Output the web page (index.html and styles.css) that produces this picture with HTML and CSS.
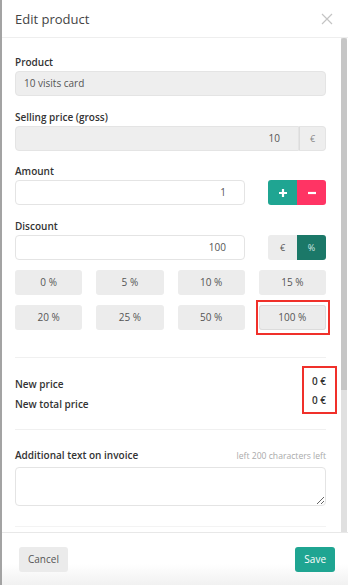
FILE: index.html
```html
<!DOCTYPE html>
<html>
<head>
    <meta charset="UTF-8">
    <title>Edit product</title>
    <link rel="stylesheet" href="styles.css">
</head>
<body>
    <div class="modal">
        <div class="modal-header">
            <span class="modal-title">Edit product</span>
            <span class="modal-close">
                <svg width="12" height="12" viewBox="0 0 12 12"><path d="M1 1 L11 11 M11 1 L1 11" stroke="#c4c4c4" stroke-width="1.2" fill="none"/></svg>
            </span>
        </div>
        <div class="modal-body">
            <div class="body-content">
                <div class="form-group">
                    <label>Product</label>
                    <div class="field readonly">10 visits card</div>
                </div>
                <div class="form-group">
                    <label>Selling price (gross)</label>
                    <div class="input-group">
                        <div class="field readonly num">10</div>
                        <div class="addon">€</div>
                    </div>
                </div>
                <div class="form-group">
                    <label>Amount</label>
                    <div class="row">
                        <div class="field num">1</div>
                        <div class="btn-pair">
                            <span class="btn-sq green">
                                <svg width="10" height="10" viewBox="0 0 10 10"><path d="M5 1 V9 M1 5 H9" stroke="#fff" stroke-width="2.2"/></svg>
                            </span>
                            <span class="btn-sq red">
                                <svg width="10" height="10" viewBox="0 0 10 10"><path d="M1 5 H9" stroke="#fff" stroke-width="2.2"/></svg>
                            </span>
                        </div>
                    </div>
                </div>
                <div class="form-group">
                    <label>Discount</label>
                    <div class="row">
                        <div class="field num">100</div>
                        <div class="btn-pair">
                            <span class="btn-sq grey">€</span>
                            <span class="btn-sq dark">%</span>
                        </div>
                    </div>
                </div>
                <div class="presets">
                    <span class="preset">0 %</span>
                    <span class="preset">5 %</span>
                    <span class="preset">10 %</span>
                    <span class="preset">15 %</span>
                    <span class="preset">20 %</span>
                    <span class="preset">25 %</span>
                    <span class="preset">50 %</span>
                    <span class="preset marked">100 %</span>
                </div>

                <div class="totals">
                    <div class="totals-labels">
                        <div>New price</div>
                        <div>New total price</div>
                    </div>
                    <div class="totals-values">
                        <div>0 €</div>
                        <div>0 €</div>
                    </div>
                </div>

                <div class="note">
                    <div class="note-head">
                        <label>Additional text on invoice</label>
                        <span class="hint">left 200 characters left</span>
                    </div>
                    <textarea class="note-area"></textarea>
                </div>
            </div>
            <div class="scrollbar">
                <div class="thumb"></div>
            </div>
        </div>
        <div class="modal-footer">
            <span class="btn cancel">Cancel</span>
            <span class="btn save">Save</span>
        </div>
    </div>
</body>
</html>
```

FILE: styles.css
```css
* {
    box-sizing: border-box;
}
html, body {
    margin: 0;
    padding: 0;
    background: #fff;
}
body {
    font-family: "Open Sans", "Liberation Sans", sans-serif;
    color: #333;
}
.modal {
    width: 348px;
    height: 585px;
    border-left: 2px solid #a3a3a3;
    display: flex;
    flex-direction: column;
    background: #fff;
}
.modal-header {
    height: 38px;
    border-bottom: 1px solid #eeeeee;
    display: flex;
    align-items: center;
    justify-content: space-between;
    padding: 0 15px 0 13px;
    flex-shrink: 0;
}
.modal-title {
    font-size: 13px;
    color: #444;
}
.modal-close {
    display: flex;
    padding-top: 1px;
}
.modal-body {
    flex: 1;
    display: flex;
    overflow: hidden;
}
.body-content {
    flex: 1;
    padding: 0 15px 0 13px;
    overflow: hidden;
}
.scrollbar {
    width: 6px;
    margin-right: 1px;
    background: #e0e0e0;
}
.thumb {
    height: 352px;
    background: #c6c6c6;
    border-radius: 3px 3px 0 0;
}
.form-group {
    margin-top: 12.5px;
}
.form-group:first-child {
    margin-top: 16px;
}
label {
    display: block;
    font-size: 10px;
    font-weight: 600;
    line-height: 16px;
    margin-bottom: 1px;
    color: #333;
}
.field {
    height: 25px;
    line-height: 23px;
    border: 1px solid #e4e4e4;
    border-radius: 4px;
    padding: 0 8px;
    font-size: 10px;
    color: #555;
    background: #fff;
}
.field.readonly {
    background: #eeeeee;
}
.field.num {
    text-align: right;
    padding-right: 18px;
}
.input-group {
    display: flex;
}
.input-group .field {
    flex: 1;
    border-radius: 4px 0 0 4px;
}
.addon {
    width: 27px;
    height: 25px;
    line-height: 23px;
    text-align: center;
    font-size: 9px;
    color: #888;
    background: #eeeeee;
    border: 1px solid #e4e4e4;
    border-left: 1px solid #dcdcdc;
    border-radius: 0 4px 4px 0;
}
.row {
    display: flex;
    justify-content: space-between;
    align-items: center;
}
.row .field {
    width: 230px;
}
.btn-pair {
    display: flex;
}
.btn-sq {
    width: 29px;
    height: 25px;
    display: flex;
    align-items: center;
    justify-content: center;
    font-size: 9px;
}
.btn-sq:first-child {
    border-radius: 3px 0 0 3px;
}
.btn-sq:last-child {
    border-radius: 0 3px 3px 0;
}
.green {
    background: #1fa592;
}
.red {
    background: #ff3464;
}
.grey {
    background: #ececec;
    color: #555;
}
.dark {
    background: #1b7868;
    color: #cfe6e1;
}
.presets {
    display: grid;
    grid-template-columns: repeat(4, 1fr);
    column-gap: 14px;
    row-gap: 10px;
    margin-top: 10px;
}
.preset {
    height: 25px;
    line-height: 25px;
    text-align: center;
    font-size: 10px;
    color: #555;
    background: #ececec;
    border-radius: 3px;
}
.preset.marked {
    position: relative;
    box-shadow: inset 0 0 0 1px #dcdcdc;
}
.preset.marked::after {
    content: "";
    position: absolute;
    top: -5px;
    bottom: -5px;
    left: -3px;
    right: -4px;
    border: 2px solid #f0302a;
}
.totals {
    margin-top: 27.5px;
    border-top: 1px solid #f0f0f0;
    border-bottom: 1px solid #f0f0f0;
    padding: 8px 0 15px 0;
    display: flex;
    justify-content: space-between;
    align-items: flex-start;
}
.totals-labels {
    font-size: 10px;
    font-weight: 600;
    line-height: 20px;
    padding-top: 8px;
    color: #333;
}
.totals-values {
    border: 2px solid #f0302a;
    padding: 4px 9px 2px 8px;
    margin-right: -11px;
    font-size: 10px;
    font-weight: 600;
    line-height: 19px;
    text-align: right;
}
.note {
    padding: 17px 0 20px 0;
    border-bottom: 1px solid #f3f3f3;
}
.note-head {
    display: flex;
    justify-content: space-between;
    align-items: baseline;
    margin-bottom: 4px;
}
.note-head label {
    margin: 0;
}
.hint {
    font-size: 8.6px;
    color: #aaa;
}
.note-area {
    display: block;
    width: 100%;
    height: 39px;
    border: 1px solid #e4e4e4;
    border-radius: 4px;
    resize: vertical;
    outline: none;
}
.modal-footer {
    flex-shrink: 0;
    height: 53px;
    border-top: 1px solid #e8e8e8;
    display: flex;
    justify-content: space-between;
    align-items: flex-start;
    padding: 14px 13px 0 17px;
    background: linear-gradient(to bottom, #fff 60%, #f1f1f1 100%);
}
.btn {
    height: 25px;
    line-height: 25px;
    font-size: 10px;
    border-radius: 3px;
}
.cancel {
    background: #ebebeb;
    color: #555;
    padding: 0 9px;
}
.save {
    background: #1fa592;
    color: #fff;
    padding: 0 9px;
}
```
